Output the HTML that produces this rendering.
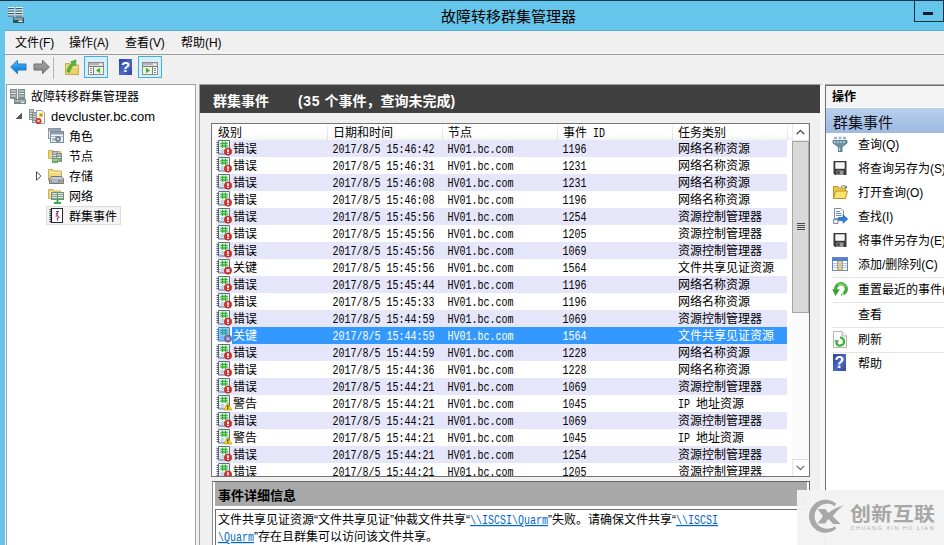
<!DOCTYPE html>
<html lang="zh-CN"><head><meta charset="utf-8"><title>故障转移群集管理器</title>
<style>
html,body{margin:0;padding:0}
html{overflow:hidden;background:#F0F0F0}
body{width:944px;height:545px;overflow:hidden;position:relative;background:#F0F0F0;
 font-family:"Liberation Sans","Noto Sans CJK SC",sans-serif;font-size:12px;color:#000}
div,svg.a{position:absolute}
div{box-sizing:content-box}
.t{white-space:nowrap}
.t.m{letter-spacing:-.1px}
.t.s{font-size:12px}
.q{display:inline-block;font-family:"Liberation Mono",monospace;font-size:10px;transform:scaleY(1.24);transform-origin:50% 72%;white-space:pre}
.k{font-family:"Liberation Sans","Noto Sans CJK SC",sans-serif;letter-spacing:0}
.k.b{font-weight:bold}
.lk{color:#0066CC;text-decoration:underline}
#defs{position:absolute;width:0;height:0;overflow:hidden}
</style></head>
<body>
<svg id="defs" aria-hidden="true"><defs><linearGradient id="gb" x1="0" y1="0" x2="0" y2="1"><stop offset="0" stop-color="#6FC3F7"/><stop offset=".5" stop-color="#2492E6"/><stop offset="1" stop-color="#1A72C8"/></linearGradient><linearGradient id="gf" x1="0" y1="0" x2="0" y2="1"><stop offset="0" stop-color="#A8A8A8"/><stop offset="1" stop-color="#808080"/></linearGradient><linearGradient id="gh" x1="0" y1="0" x2="1" y2="1"><stop offset="0" stop-color="#2B3F9E"/><stop offset=".55" stop-color="#4A68C8"/><stop offset="1" stop-color="#33479F"/></linearGradient><linearGradient id="ne" x1="0" y1="0" x2="1" y2="1"><stop offset="0" stop-color="#FFFFFF"/><stop offset="1" stop-color="#DCE6EE"/></linearGradient><linearGradient id="nes" x1="0" y1="0" x2="1" y2="1"><stop offset="0" stop-color="#99CCFF"/><stop offset="1" stop-color="#88C0F6"/></linearGradient></defs></svg>
<div style="left:0px;top:0px;width:944px;height:31px;background:#66C5EA"></div>
<div style="left:0px;top:0px;width:944px;height:1px;background:#16354A"></div>
<div style="left:0px;top:31px;width:5px;height:514px;background:#66C5EA"></div>
<svg class="a" style="left:8px;top:7px" width="16" height="17" viewBox="0 0 16 17"><rect x="0" y="0" width="7" height="10" fill="#EAF2F6"/><rect x="0" y="1.0" width="6.500" height="1.200" fill="#3A5A6E"/><rect x="0" y="3.5" width="6.500" height="1.200" fill="#3A5A6E"/><rect x="0" y="6.0" width="6.500" height="1.200" fill="#3A5A6E"/><rect x="0" y="8.5" width="6.500" height="1.200" fill="#3A5A6E"/><rect x="8" y="0" width="7" height="10" fill="#EAF2F6"/><rect x="8" y="1.0" width="6.500" height="1.200" fill="#3A5A6E"/><rect x="8" y="3.5" width="6.500" height="1.200" fill="#3A5A6E"/><rect x="8" y="6.0" width="6.500" height="1.200" fill="#3A5A6E"/><rect x="8" y="8.5" width="6.500" height="1.200" fill="#3A5A6E"/><rect x="5" y="10.500" width="11" height="5.500" fill="#33505F"/><rect x="6" y="11.500" width="9" height="1" fill="#D8E6EC"/><rect x="10.500" y="13.500" width="4" height="1.500" fill="#F4F8FA"/></svg>
<div class="t" style="left:441px;top:5.5px;height:22px;line-height:22px;font-size:15px;width:135px;text-align:center;color:#000"><span class="k">故障转移群集管理器</span></div>
<div style="left:914px;top:0px;width:28px;height:21px;border:1px solid #12303F;border-top:none"></div>
<div style="left:943px;top:0px;width:1px;height:22px;background:#12303F"></div>
<div style="left:923px;top:12px;width:10px;height:3px;background:#0A1A2A"></div>
<div style="left:5px;top:31px;width:939px;height:23px;background:#F0F0F0"></div>
<div style="left:5px;top:30px;width:939px;height:1px;background:#5EA6CC"></div>
<div style="left:5px;top:31px;width:939px;height:1px;background:#EAF3F9"></div>
<div class="t m" style="left:15px;top:34px;height:18px;line-height:18px;font-size:12px;"><span class="k">文件</span>(F)</div>
<div class="t m" style="left:69px;top:34px;height:18px;line-height:18px;font-size:12px;"><span class="k">操作</span>(A)</div>
<div class="t m" style="left:125px;top:34px;height:18px;line-height:18px;font-size:12px;"><span class="k">查看</span>(V)</div>
<div class="t m" style="left:181px;top:34px;height:18px;line-height:18px;font-size:12px;"><span class="k">帮助</span>(H)</div>
<div style="left:5px;top:52px;width:939px;height:1px;background:#F7F7F7"></div>
<div style="left:5px;top:54px;width:939px;height:1px;background:#A0A0A0"></div>
<svg class="a" style="left:10px;top:59px" width="17" height="16" viewBox="0 0 17 16"><path d="M.7 8L7.5 1.2V5H16V11H7.5V14.8Z" fill="url(#gb)" stroke="#2C7CC9" stroke-width="1" stroke-linejoin="round"/></svg>
<svg class="a" style="left:33px;top:59px" width="17" height="16" viewBox="0 0 17 16"><path d="M16.3 8L9.5 1.2V5H1V11H9.5V14.8Z" fill="url(#gf)" stroke="#6E6E6E" stroke-width="1" stroke-linejoin="round"/></svg>
<div style="left:53px;top:57px;width:1px;height:22px;background:#B4B4B4"></div>
<svg class="a" style="left:64px;top:59px" width="16" height="16" viewBox="0 0 16 16"><path d="M1.5 4.5H6L7.5 6H14.5V15.5H1.5Z" fill="#EBD06E" stroke="#C9A84C"/><path d="M1.5 8H14.5" stroke="#F6E7A6"/><path d="M3 12.500C3.500 9 5.500 6 8 4.200L6.800 2.800L12 1L11.500 6.500L10 5.500C8 7.500 6.300 10 5.500 13.500Z" fill="#52BB3C" stroke="#2F8A22" stroke-width=".6"/></svg>
<div style="left:84px;top:56px;width:24px;height:22px;border:1px solid #3EB1DA;background:#D8EFFB;box-sizing:border-box"></div>
<svg class="a" style="left:88px;top:62px" width="16" height="13" viewBox="0 0 16 13"><rect x=".5" y=".5" width="15" height="12" fill="#fff" stroke="#8C8C8C"/><rect x="1" y="1" width="14" height="2.5" fill="#B4B4B4"/><rect x="11" y="1.5" width="1.5" height="1.5" fill="#fff"/><rect x="13" y="1.5" width="1.5" height="1.5" fill="#fff"/><path d="M.5 4.5H15.5" stroke="#7D7D7D"/><path d="M5.5 4.5V12.5" stroke="#7D7D7D"/><path d="M2 6.5H4M2 8.5H4M2 10.5H4" stroke="#7D7D7D"/><rect x="6" y="5" width="9" height="7" fill="#EAF6E4"/><path d="M12 5.8V11.2L8 8.5Z" fill="#3FAE2A"/></svg>
<svg class="a" style="left:119px;top:59px" width="13" height="16" viewBox="0 0 13 16"><rect x="0" y="0" width="13" height="16" fill="url(#gh)"/><text x="6.5" y="13.4" text-anchor="middle" font-family="Liberation Sans" font-weight="bold" font-size="15" fill="#fff">?</text></svg>
<div style="left:138px;top:56px;width:24px;height:22px;border:1px solid #3EB1DA;background:#D8EFFB;box-sizing:border-box"></div>
<svg class="a" style="left:142px;top:62px" width="16" height="13" viewBox="0 0 16 13"><rect x=".5" y=".5" width="15" height="12" fill="#fff" stroke="#8C8C8C"/><rect x="1" y="1" width="14" height="2.5" fill="#B4B4B4"/><rect x="11" y="1.5" width="1.5" height="1.5" fill="#fff"/><rect x="13" y="1.5" width="1.5" height="1.5" fill="#fff"/><path d="M.5 4.5H15.5" stroke="#7D7D7D"/><path d="M10.5 4.5V12.5" stroke="#7D7D7D"/><path d="M12 6.5H14M12 8.5H14M12 10.5H14" stroke="#7D7D7D"/><rect x="1" y="5" width="9" height="7" fill="#EAF6E4"/><path d="M4 5.8V11.2L8 8.5Z" fill="#3FAE2A"/></svg>
<div style="left:6px;top:84px;width:190px;height:461px;background:#fff;border:1px solid #A0A0A0;border-bottom:none;box-sizing:border-box"></div>
<svg class="a" style="left:10px;top:88px" width="16" height="16" viewBox="0 0 16 16"><rect x="0" y="1" width="7" height="10" fill="#7F8F90"/><rect x="1" y="2.5" width="5" height="1" fill="#E4EAEA"/><rect x="1" y="5.0" width="5" height="1" fill="#E4EAEA"/><rect x="1" y="7.5" width="5" height="1" fill="#E4EAEA"/><rect x="8" y="1" width="7" height="10" fill="#7F8F90"/><rect x="9" y="2.5" width="5" height="1" fill="#E4EAEA"/><rect x="9" y="5.0" width="5" height="1" fill="#E4EAEA"/><rect x="9" y="7.5" width="5" height="1" fill="#E4EAEA"/><rect x="4" y="11" width="12" height="5" fill="#7A8A8C"/><rect x="5" y="12.5" width="10" height="1" fill="#D8E0E0"/><rect x="11" y="14" width="3" height="1" fill="#E8EEEE"/></svg>
<div class="t" style="left:31px;top:88px;height:18px;line-height:18px;font-size:12px;"><span class="k">故障转移群集管理器</span></div>
<svg class="a" style="left:16px;top:113px" width="6" height="6" viewBox="0 0 6 6"><path d="M5.7 .3V5.700H.3Z" fill="#595959" stroke="#262626" stroke-width=".6"/></svg>
<svg class="a" style="left:29px;top:108px" width="16" height="16" viewBox="0 0 16 16"><rect x="0" y="1" width="5" height="11" fill="#8A9898"/><rect x="1" y="2.5" width="3" height="1" fill="#E4EAEA"/><rect x="1" y="5.0" width="3" height="1" fill="#E4EAEA"/><rect x="1" y="7.5" width="3" height="1" fill="#E4EAEA"/><rect x="1" y="10.0" width="3" height="1" fill="#E4EAEA"/><rect x="3" y="4" width="5" height="11" fill="#7F8F90"/><rect x="4" y="5.5" width="3" height="1" fill="#E4EAEA"/><rect x="4" y="8.0" width="3" height="1" fill="#E4EAEA"/><rect x="4" y="10.5" width="3" height="1" fill="#E4EAEA"/><rect x="4" y="13.0" width="3" height="1" fill="#E4EAEA"/><path d="M7.5 2.5H13L15.5 5V15.5H7.5Z" fill="#FBFBF4" stroke="#9A9AA0"/><rect x="10" y="5" width="4" height="4" fill="#E8D23A"/><rect x="11" y="6" width="2" height="2" fill="#B8960A"/><circle cx="9.5" cy="13" r="3" fill="#D0302A"/><path d="M8.3 11.8L10.7 14.2M10.7 11.8L8.3 14.2" stroke="#fff" stroke-width="1"/></svg>
<div class="t" style="left:51px;top:106.5px;height:19px;line-height:19px;font-size:13px;">devcluster.bc.com</div>
<svg class="a" style="left:48px;top:128px" width="16" height="16" viewBox="0 0 16 16"><rect x=".5" y=".5" width="12" height="10" fill="#EEF2F6" stroke="#8895A3"/><rect x="1" y="1" width="11" height="2" fill="#98A4B2"/><rect x="2.5" y="3.5" width="13" height="11" fill="#F4F7FA" stroke="#7D8A99"/><rect x="3" y="4" width="12" height="2.4" fill="#8D9AA9"/><path d="M3 8.5H15" stroke="#AEB9C5"/><circle cx="10" cy="11" r="3" fill="#6F86A3"/><circle cx="10" cy="11" r="1.1" fill="#E8EEF4"/><rect x="4" y="10" width="3" height="3" fill="#AEB9C5"/></svg>
<div class="t" style="left:69px;top:128px;height:18px;line-height:18px;font-size:12px;"><span class="k">角色</span></div>
<svg class="a" style="left:48px;top:148px" width="16" height="16" viewBox="0 0 16 16"><path d="M.5 2.5H5L6 3.5H12.5V10.5H.5Z" fill="#EED678" stroke="#CFAF55"/><rect x="4" y="3" width="6" height="9" fill="#8A9A98"/><rect x="5" y="4.5" width="4" height="1" fill="#E6ECEA"/><rect x="5" y="7.0" width="4" height="1" fill="#E6ECEA"/><rect x="5" y="9.5" width="4" height="1" fill="#E6ECEA"/><rect x="8" y="5" width="6" height="9" fill="#7E8E8C"/><rect x="9" y="6.5" width="4" height="1" fill="#E6ECEA"/><rect x="9" y="9.0" width="4" height="1" fill="#E6ECEA"/><rect x="9" y="11.5" width="4" height="1" fill="#E6ECEA"/><rect x="4" y="10" width="6" height="5" fill="#6FA86A"/><rect x="5" y="11.5" width="4" height="1" fill="#CFE6CC"/><rect x="9" y="11" width="4" height="2" fill="#7FB07A"/></svg>
<div class="t" style="left:69px;top:148px;height:18px;line-height:18px;font-size:12px;"><span class="k">节点</span></div>
<svg class="a" style="left:36px;top:171px" width="6" height="10" viewBox="0 0 6 10"><path d="M.5 .8L4.900 5L.5 9.200Z" fill="#fff" stroke="#4C4C4C" stroke-width="1"/></svg>
<svg class="a" style="left:48px;top:168px" width="16" height="16" viewBox="0 0 16 16"><path d="M.5 1.5H5L6 3H13.5V12.5H.5Z" fill="#F0DA80" stroke="#CFAF55"/><path d="M1 4.5H13" stroke="#F8ECB4"/><path d="M3.5 8.5H13.5L15.5 11V15.5H1.5V11Z" fill="#C9CDD0" stroke="#6F7478"/><rect x="2.5" y="11.5" width="12" height="3" fill="#8A8F94"/><rect x="4" y="12.5" width="6" height="1" fill="#E6E8EA"/><rect x="12" y="12.5" width="1.5" height="1" fill="#6FD05A"/></svg>
<div class="t" style="left:69px;top:168px;height:18px;line-height:18px;font-size:12px;"><span class="k">存储</span></div>
<svg class="a" style="left:48px;top:188px" width="16" height="16" viewBox="0 0 16 16"><path d="M.5 1.5H5L6 3H12.5V10.5H.5Z" fill="#F0DA80" stroke="#CFAF55"/><path d="M1 4.500H12" stroke="#F8ECB4"/><rect x="3.500" y="4.5" width="12" height="7" fill="#DCE4E0" stroke="#7B8C86"/><path d="M4 6.500H15M4 8.500H15M4 10.500H15" stroke="#7FAE8C"/><path d="M9.500 4.500V11.5" stroke="#7B8C86"/><path d="M9.500 11.500V15" stroke="#2FAE4E" stroke-width="2"/><path d="M6 15H13" stroke="#2FAE4E" stroke-width="2"/></svg>
<div class="t" style="left:69px;top:188px;height:18px;line-height:18px;font-size:12px;"><span class="k">网络</span></div>
<div style="left:46px;top:206px;width:75px;height:19px;background:#F3F3F3;border:1px solid #DCDCDC;box-sizing:border-box"></div>
<svg class="a" style="left:49px;top:208px" width="14" height="16" viewBox="0 0 14 16"><rect x="2.5" y=".5" width="11" height="14" fill="#fff" stroke="#2A2A2A"/><rect x="0.5" y="1.2" width="2.6" height="1" fill="#111"/><rect x="0.5" y="3.2" width="2.6" height="1" fill="#111"/><rect x="0.5" y="5.2" width="2.6" height="1" fill="#111"/><rect x="0.5" y="7.2" width="2.6" height="1" fill="#111"/><rect x="0.5" y="9.2" width="2.6" height="1" fill="#111"/><rect x="0.5" y="11.2" width="2.6" height="1" fill="#111"/><rect x="0.5" y="13.2" width="2.6" height="1" fill="#111"/><path d="M8.5 3V6M7 5L8.5 7.500L10 10M8.500 10V12.5" stroke="#B03060" stroke-width="1.2" fill="none"/><path d="M7 3.500H10M6.500 8H8M9 9.500H10.500" stroke="#6A3FB0" stroke-width="1"/></svg>
<div class="t" style="left:69px;top:208px;height:18px;line-height:18px;font-size:12px;"><span class="k">群集事件</span></div>
<div style="left:199px;top:84px;width:1px;height:461px;background:#A0A0A0"></div>
<div style="left:199px;top:84px;width:622px;height:1px;background:#A0A0A0"></div>
<div style="left:200px;top:85px;width:620px;height:28px;background:#404040"></div>
<div class="t" style="left:213px;top:91px;height:20px;line-height:20px;font-size:14px;color:#fff"><span class="k b">群集事件</span></div>
<div class="t" style="left:298px;top:91px;height:20px;line-height:20px;font-size:14px;color:#fff;font-weight:bold;letter-spacing:.6px">(35 <span class="k b">个事件，查询未完成</span>)</div>
<div style="left:211px;top:123px;width:599px;height:354px;background:#fff;border:1px solid #747474;box-sizing:border-box"></div>
<div style="left:212px;top:124px;width:580px;height:16px;background:linear-gradient(#fff,#fff 60%,#F4F4F4)"></div>
<div style="left:327px;top:124px;width:1px;height:16px;background:linear-gradient(#F4F4F4,#DCDCDC)"></div>
<div style="left:442px;top:124px;width:1px;height:16px;background:linear-gradient(#F4F4F4,#DCDCDC)"></div>
<div style="left:557px;top:124px;width:1px;height:16px;background:linear-gradient(#F4F4F4,#DCDCDC)"></div>
<div style="left:672px;top:124px;width:1px;height:16px;background:linear-gradient(#F4F4F4,#DCDCDC)"></div>
<div style="left:787px;top:124px;width:1px;height:16px;background:linear-gradient(#F4F4F4,#DCDCDC)"></div>
<div class="t s" style="left:218px;top:125px;height:16px;line-height:16px;"><span class="k">级别</span></div>
<div class="t s" style="left:333px;top:125px;height:16px;line-height:16px;"><span class="k">日期和时间</span></div>
<div class="t s" style="left:448px;top:125px;height:16px;line-height:16px;"><span class="k">节点</span></div>
<div class="t s" style="left:563px;top:125px;height:16px;line-height:16px;"><span class="k">事件</span><span class="q"> ID</span></div>
<div class="t s" style="left:678px;top:125px;height:16px;line-height:16px;"><span class="k">任务类别</span></div>
<div style="left:211px;top:123px;width:581px;height:353px;overflow:hidden"><div style="left:5px;top:17px;width:571px;height:17px;background:#E6E6FA"></div><svg class="a" style="left:5px;top:17px" width="16" height="16" viewBox="0 0 16 16"><path d="M2.500 .500H13.500V14H2.500Z" fill="url(#ne)" stroke="#5E7082"/><path d="M.6 2.5H3.2" stroke="#4A5A6A" stroke-width="1"/><path d="M.6 4.5H3.2" stroke="#4A5A6A" stroke-width="1"/><path d="M.6 6.5H3.2" stroke="#4A5A6A" stroke-width="1"/><path d="M.6 8.5H3.2" stroke="#4A5A6A" stroke-width="1"/><path d="M.6 10.5H3.2" stroke="#4A5A6A" stroke-width="1"/><path d="M.6 12.5H3.2" stroke="#4A5A6A" stroke-width="1"/><path d="M4.300 3.500H11.700M4.300 6H11.700M6.500 1.500V8M9.500 1.500V8" stroke="#2FB52F" stroke-width="1.300"/><path d="M4.500 10H8M4.500 12H7.500" stroke="#9FBBD6" stroke-width="1"/><circle cx="12" cy="11.600" r="3.700" fill="#D2332E" stroke="#A82420" stroke-width=".6"/><rect x="11.100" y="9.300" width="1.800" height="2.700" rx=".5" fill="#FFFFFF"/><rect x="11.100" y="12.700" width="1.800" height="1.300" fill="#FFFFFF"/></svg><div class="t s" style="left:22px;top:18px;height:16px;line-height:16px;"><span class="k">错误</span></div><div class="t s" style="left:121.5px;top:18px;height:16px;line-height:16px;"><span class="q">2017/8/5 15:46:42</span></div><div class="t s" style="left:236.5px;top:18px;height:16px;line-height:16px;"><span class="q">HV01.bc.com</span></div><div class="t s" style="left:351.5px;top:18px;height:16px;line-height:16px;"><span class="q">1196</span></div><div class="t s" style="left:467px;top:18px;height:16px;line-height:16px;"><span class="k">网络名称资源</span></div><svg class="a" style="left:5px;top:34px" width="16" height="16" viewBox="0 0 16 16"><path d="M2.500 .500H13.500V14H2.500Z" fill="url(#ne)" stroke="#5E7082"/><path d="M.6 2.5H3.2" stroke="#4A5A6A" stroke-width="1"/><path d="M.6 4.5H3.2" stroke="#4A5A6A" stroke-width="1"/><path d="M.6 6.5H3.2" stroke="#4A5A6A" stroke-width="1"/><path d="M.6 8.5H3.2" stroke="#4A5A6A" stroke-width="1"/><path d="M.6 10.5H3.2" stroke="#4A5A6A" stroke-width="1"/><path d="M.6 12.5H3.2" stroke="#4A5A6A" stroke-width="1"/><path d="M4.300 3.500H11.700M4.300 6H11.700M6.500 1.500V8M9.500 1.500V8" stroke="#2FB52F" stroke-width="1.300"/><path d="M4.500 10H8M4.500 12H7.500" stroke="#9FBBD6" stroke-width="1"/><circle cx="12" cy="11.600" r="3.700" fill="#D2332E" stroke="#A82420" stroke-width=".6"/><rect x="11.100" y="9.300" width="1.800" height="2.700" rx=".5" fill="#FFFFFF"/><rect x="11.100" y="12.700" width="1.800" height="1.300" fill="#FFFFFF"/></svg><div class="t s" style="left:22px;top:35px;height:16px;line-height:16px;"><span class="k">错误</span></div><div class="t s" style="left:121.5px;top:35px;height:16px;line-height:16px;"><span class="q">2017/8/5 15:46:31</span></div><div class="t s" style="left:236.5px;top:35px;height:16px;line-height:16px;"><span class="q">HV01.bc.com</span></div><div class="t s" style="left:351.5px;top:35px;height:16px;line-height:16px;"><span class="q">1231</span></div><div class="t s" style="left:467px;top:35px;height:16px;line-height:16px;"><span class="k">网络名称资源</span></div><div style="left:5px;top:51px;width:571px;height:17px;background:#E6E6FA"></div><svg class="a" style="left:5px;top:51px" width="16" height="16" viewBox="0 0 16 16"><path d="M2.500 .500H13.500V14H2.500Z" fill="url(#ne)" stroke="#5E7082"/><path d="M.6 2.5H3.2" stroke="#4A5A6A" stroke-width="1"/><path d="M.6 4.5H3.2" stroke="#4A5A6A" stroke-width="1"/><path d="M.6 6.5H3.2" stroke="#4A5A6A" stroke-width="1"/><path d="M.6 8.5H3.2" stroke="#4A5A6A" stroke-width="1"/><path d="M.6 10.5H3.2" stroke="#4A5A6A" stroke-width="1"/><path d="M.6 12.5H3.2" stroke="#4A5A6A" stroke-width="1"/><path d="M4.300 3.500H11.700M4.300 6H11.700M6.500 1.500V8M9.500 1.500V8" stroke="#2FB52F" stroke-width="1.300"/><path d="M4.500 10H8M4.500 12H7.500" stroke="#9FBBD6" stroke-width="1"/><circle cx="12" cy="11.600" r="3.700" fill="#D2332E" stroke="#A82420" stroke-width=".6"/><rect x="11.100" y="9.300" width="1.800" height="2.700" rx=".5" fill="#FFFFFF"/><rect x="11.100" y="12.700" width="1.800" height="1.300" fill="#FFFFFF"/></svg><div class="t s" style="left:22px;top:52px;height:16px;line-height:16px;"><span class="k">错误</span></div><div class="t s" style="left:121.5px;top:52px;height:16px;line-height:16px;"><span class="q">2017/8/5 15:46:08</span></div><div class="t s" style="left:236.5px;top:52px;height:16px;line-height:16px;"><span class="q">HV01.bc.com</span></div><div class="t s" style="left:351.5px;top:52px;height:16px;line-height:16px;"><span class="q">1231</span></div><div class="t s" style="left:467px;top:52px;height:16px;line-height:16px;"><span class="k">网络名称资源</span></div><svg class="a" style="left:5px;top:68px" width="16" height="16" viewBox="0 0 16 16"><path d="M2.500 .500H13.500V14H2.500Z" fill="url(#ne)" stroke="#5E7082"/><path d="M.6 2.5H3.2" stroke="#4A5A6A" stroke-width="1"/><path d="M.6 4.5H3.2" stroke="#4A5A6A" stroke-width="1"/><path d="M.6 6.5H3.2" stroke="#4A5A6A" stroke-width="1"/><path d="M.6 8.5H3.2" stroke="#4A5A6A" stroke-width="1"/><path d="M.6 10.5H3.2" stroke="#4A5A6A" stroke-width="1"/><path d="M.6 12.5H3.2" stroke="#4A5A6A" stroke-width="1"/><path d="M4.300 3.500H11.700M4.300 6H11.700M6.500 1.500V8M9.500 1.500V8" stroke="#2FB52F" stroke-width="1.300"/><path d="M4.500 10H8M4.500 12H7.500" stroke="#9FBBD6" stroke-width="1"/><circle cx="12" cy="11.600" r="3.700" fill="#D2332E" stroke="#A82420" stroke-width=".6"/><rect x="11.100" y="9.300" width="1.800" height="2.700" rx=".5" fill="#FFFFFF"/><rect x="11.100" y="12.700" width="1.800" height="1.300" fill="#FFFFFF"/></svg><div class="t s" style="left:22px;top:69px;height:16px;line-height:16px;"><span class="k">错误</span></div><div class="t s" style="left:121.5px;top:69px;height:16px;line-height:16px;"><span class="q">2017/8/5 15:46:08</span></div><div class="t s" style="left:236.5px;top:69px;height:16px;line-height:16px;"><span class="q">HV01.bc.com</span></div><div class="t s" style="left:351.5px;top:69px;height:16px;line-height:16px;"><span class="q">1196</span></div><div class="t s" style="left:467px;top:69px;height:16px;line-height:16px;"><span class="k">网络名称资源</span></div><div style="left:5px;top:85px;width:571px;height:17px;background:#E6E6FA"></div><svg class="a" style="left:5px;top:85px" width="16" height="16" viewBox="0 0 16 16"><path d="M2.500 .500H13.500V14H2.500Z" fill="url(#ne)" stroke="#5E7082"/><path d="M.6 2.5H3.2" stroke="#4A5A6A" stroke-width="1"/><path d="M.6 4.5H3.2" stroke="#4A5A6A" stroke-width="1"/><path d="M.6 6.5H3.2" stroke="#4A5A6A" stroke-width="1"/><path d="M.6 8.5H3.2" stroke="#4A5A6A" stroke-width="1"/><path d="M.6 10.5H3.2" stroke="#4A5A6A" stroke-width="1"/><path d="M.6 12.5H3.2" stroke="#4A5A6A" stroke-width="1"/><path d="M4.300 3.500H11.700M4.300 6H11.700M6.500 1.500V8M9.500 1.500V8" stroke="#2FB52F" stroke-width="1.300"/><path d="M4.500 10H8M4.500 12H7.500" stroke="#9FBBD6" stroke-width="1"/><circle cx="12" cy="11.600" r="3.700" fill="#D2332E" stroke="#A82420" stroke-width=".6"/><rect x="11.100" y="9.300" width="1.800" height="2.700" rx=".5" fill="#FFFFFF"/><rect x="11.100" y="12.700" width="1.800" height="1.300" fill="#FFFFFF"/></svg><div class="t s" style="left:22px;top:86px;height:16px;line-height:16px;"><span class="k">错误</span></div><div class="t s" style="left:121.5px;top:86px;height:16px;line-height:16px;"><span class="q">2017/8/5 15:45:56</span></div><div class="t s" style="left:236.5px;top:86px;height:16px;line-height:16px;"><span class="q">HV01.bc.com</span></div><div class="t s" style="left:351.5px;top:86px;height:16px;line-height:16px;"><span class="q">1254</span></div><div class="t s" style="left:467px;top:86px;height:16px;line-height:16px;"><span class="k">资源控制管理器</span></div><svg class="a" style="left:5px;top:102px" width="16" height="16" viewBox="0 0 16 16"><path d="M2.500 .500H13.500V14H2.500Z" fill="url(#ne)" stroke="#5E7082"/><path d="M.6 2.5H3.2" stroke="#4A5A6A" stroke-width="1"/><path d="M.6 4.5H3.2" stroke="#4A5A6A" stroke-width="1"/><path d="M.6 6.5H3.2" stroke="#4A5A6A" stroke-width="1"/><path d="M.6 8.5H3.2" stroke="#4A5A6A" stroke-width="1"/><path d="M.6 10.5H3.2" stroke="#4A5A6A" stroke-width="1"/><path d="M.6 12.5H3.2" stroke="#4A5A6A" stroke-width="1"/><path d="M4.300 3.500H11.700M4.300 6H11.700M6.500 1.500V8M9.500 1.500V8" stroke="#2FB52F" stroke-width="1.300"/><path d="M4.500 10H8M4.500 12H7.500" stroke="#9FBBD6" stroke-width="1"/><circle cx="12" cy="11.600" r="3.700" fill="#D2332E" stroke="#A82420" stroke-width=".6"/><rect x="11.100" y="9.300" width="1.800" height="2.700" rx=".5" fill="#FFFFFF"/><rect x="11.100" y="12.700" width="1.800" height="1.300" fill="#FFFFFF"/></svg><div class="t s" style="left:22px;top:103px;height:16px;line-height:16px;"><span class="k">错误</span></div><div class="t s" style="left:121.5px;top:103px;height:16px;line-height:16px;"><span class="q">2017/8/5 15:45:56</span></div><div class="t s" style="left:236.5px;top:103px;height:16px;line-height:16px;"><span class="q">HV01.bc.com</span></div><div class="t s" style="left:351.5px;top:103px;height:16px;line-height:16px;"><span class="q">1205</span></div><div class="t s" style="left:467px;top:103px;height:16px;line-height:16px;"><span class="k">资源控制管理器</span></div><div style="left:5px;top:119px;width:571px;height:17px;background:#E6E6FA"></div><svg class="a" style="left:5px;top:119px" width="16" height="16" viewBox="0 0 16 16"><path d="M2.500 .500H13.500V14H2.500Z" fill="url(#ne)" stroke="#5E7082"/><path d="M.6 2.5H3.2" stroke="#4A5A6A" stroke-width="1"/><path d="M.6 4.5H3.2" stroke="#4A5A6A" stroke-width="1"/><path d="M.6 6.5H3.2" stroke="#4A5A6A" stroke-width="1"/><path d="M.6 8.5H3.2" stroke="#4A5A6A" stroke-width="1"/><path d="M.6 10.5H3.2" stroke="#4A5A6A" stroke-width="1"/><path d="M.6 12.5H3.2" stroke="#4A5A6A" stroke-width="1"/><path d="M4.300 3.500H11.700M4.300 6H11.700M6.500 1.500V8M9.500 1.500V8" stroke="#2FB52F" stroke-width="1.300"/><path d="M4.500 10H8M4.500 12H7.500" stroke="#9FBBD6" stroke-width="1"/><circle cx="12" cy="11.600" r="3.700" fill="#D2332E" stroke="#A82420" stroke-width=".6"/><rect x="11.100" y="9.300" width="1.800" height="2.700" rx=".5" fill="#FFFFFF"/><rect x="11.100" y="12.700" width="1.800" height="1.300" fill="#FFFFFF"/></svg><div class="t s" style="left:22px;top:120px;height:16px;line-height:16px;"><span class="k">错误</span></div><div class="t s" style="left:121.5px;top:120px;height:16px;line-height:16px;"><span class="q">2017/8/5 15:45:56</span></div><div class="t s" style="left:236.5px;top:120px;height:16px;line-height:16px;"><span class="q">HV01.bc.com</span></div><div class="t s" style="left:351.5px;top:120px;height:16px;line-height:16px;"><span class="q">1069</span></div><div class="t s" style="left:467px;top:120px;height:16px;line-height:16px;"><span class="k">资源控制管理器</span></div><svg class="a" style="left:5px;top:136px" width="16" height="16" viewBox="0 0 16 16"><path d="M2.500 .500H13.500V14H2.500Z" fill="url(#ne)" stroke="#5E7082"/><path d="M.6 2.5H3.2" stroke="#4A5A6A" stroke-width="1"/><path d="M.6 4.5H3.2" stroke="#4A5A6A" stroke-width="1"/><path d="M.6 6.5H3.2" stroke="#4A5A6A" stroke-width="1"/><path d="M.6 8.5H3.2" stroke="#4A5A6A" stroke-width="1"/><path d="M.6 10.5H3.2" stroke="#4A5A6A" stroke-width="1"/><path d="M.6 12.5H3.2" stroke="#4A5A6A" stroke-width="1"/><path d="M4.300 3.500H11.700M4.300 6H11.700M6.500 1.500V8M9.500 1.500V8" stroke="#2FB52F" stroke-width="1.300"/><path d="M4.500 10H8M4.500 12H7.500" stroke="#9FBBD6" stroke-width="1"/><circle cx="12" cy="11.600" r="3.700" fill="#D2332E" stroke="#A82420" stroke-width=".6"/><path d="M10.600 10.200L13.400 13M13.400 10.200L10.600 13" stroke="#FFFFFF" stroke-width="1.300"/></svg><div class="t s" style="left:22px;top:137px;height:16px;line-height:16px;"><span class="k">关键</span></div><div class="t s" style="left:121.5px;top:137px;height:16px;line-height:16px;"><span class="q">2017/8/5 15:45:56</span></div><div class="t s" style="left:236.5px;top:137px;height:16px;line-height:16px;"><span class="q">HV01.bc.com</span></div><div class="t s" style="left:351.5px;top:137px;height:16px;line-height:16px;"><span class="q">1564</span></div><div class="t s" style="left:467px;top:137px;height:16px;line-height:16px;"><span class="k">文件共享见证资源</span></div><div style="left:5px;top:153px;width:571px;height:17px;background:#E6E6FA"></div><svg class="a" style="left:5px;top:153px" width="16" height="16" viewBox="0 0 16 16"><path d="M2.500 .500H13.500V14H2.500Z" fill="url(#ne)" stroke="#5E7082"/><path d="M.6 2.5H3.2" stroke="#4A5A6A" stroke-width="1"/><path d="M.6 4.5H3.2" stroke="#4A5A6A" stroke-width="1"/><path d="M.6 6.5H3.2" stroke="#4A5A6A" stroke-width="1"/><path d="M.6 8.5H3.2" stroke="#4A5A6A" stroke-width="1"/><path d="M.6 10.5H3.2" stroke="#4A5A6A" stroke-width="1"/><path d="M.6 12.5H3.2" stroke="#4A5A6A" stroke-width="1"/><path d="M4.300 3.500H11.700M4.300 6H11.700M6.500 1.500V8M9.500 1.500V8" stroke="#2FB52F" stroke-width="1.300"/><path d="M4.500 10H8M4.500 12H7.500" stroke="#9FBBD6" stroke-width="1"/><circle cx="12" cy="11.600" r="3.700" fill="#D2332E" stroke="#A82420" stroke-width=".6"/><rect x="11.100" y="9.300" width="1.800" height="2.700" rx=".5" fill="#FFFFFF"/><rect x="11.100" y="12.700" width="1.800" height="1.300" fill="#FFFFFF"/></svg><div class="t s" style="left:22px;top:154px;height:16px;line-height:16px;"><span class="k">错误</span></div><div class="t s" style="left:121.5px;top:154px;height:16px;line-height:16px;"><span class="q">2017/8/5 15:45:44</span></div><div class="t s" style="left:236.5px;top:154px;height:16px;line-height:16px;"><span class="q">HV01.bc.com</span></div><div class="t s" style="left:351.5px;top:154px;height:16px;line-height:16px;"><span class="q">1196</span></div><div class="t s" style="left:467px;top:154px;height:16px;line-height:16px;"><span class="k">网络名称资源</span></div><svg class="a" style="left:5px;top:170px" width="16" height="16" viewBox="0 0 16 16"><path d="M2.500 .500H13.500V14H2.500Z" fill="url(#ne)" stroke="#5E7082"/><path d="M.6 2.5H3.2" stroke="#4A5A6A" stroke-width="1"/><path d="M.6 4.5H3.2" stroke="#4A5A6A" stroke-width="1"/><path d="M.6 6.5H3.2" stroke="#4A5A6A" stroke-width="1"/><path d="M.6 8.5H3.2" stroke="#4A5A6A" stroke-width="1"/><path d="M.6 10.5H3.2" stroke="#4A5A6A" stroke-width="1"/><path d="M.6 12.5H3.2" stroke="#4A5A6A" stroke-width="1"/><path d="M4.300 3.500H11.700M4.300 6H11.700M6.500 1.500V8M9.500 1.500V8" stroke="#2FB52F" stroke-width="1.300"/><path d="M4.500 10H8M4.500 12H7.500" stroke="#9FBBD6" stroke-width="1"/><circle cx="12" cy="11.600" r="3.700" fill="#D2332E" stroke="#A82420" stroke-width=".6"/><rect x="11.100" y="9.300" width="1.800" height="2.700" rx=".5" fill="#FFFFFF"/><rect x="11.100" y="12.700" width="1.800" height="1.300" fill="#FFFFFF"/></svg><div class="t s" style="left:22px;top:171px;height:16px;line-height:16px;"><span class="k">错误</span></div><div class="t s" style="left:121.5px;top:171px;height:16px;line-height:16px;"><span class="q">2017/8/5 15:45:33</span></div><div class="t s" style="left:236.5px;top:171px;height:16px;line-height:16px;"><span class="q">HV01.bc.com</span></div><div class="t s" style="left:351.5px;top:171px;height:16px;line-height:16px;"><span class="q">1196</span></div><div class="t s" style="left:467px;top:171px;height:16px;line-height:16px;"><span class="k">网络名称资源</span></div><div style="left:5px;top:187px;width:571px;height:17px;background:#E6E6FA"></div><svg class="a" style="left:5px;top:187px" width="16" height="16" viewBox="0 0 16 16"><path d="M2.500 .500H13.500V14H2.500Z" fill="url(#ne)" stroke="#5E7082"/><path d="M.6 2.5H3.2" stroke="#4A5A6A" stroke-width="1"/><path d="M.6 4.5H3.2" stroke="#4A5A6A" stroke-width="1"/><path d="M.6 6.5H3.2" stroke="#4A5A6A" stroke-width="1"/><path d="M.6 8.5H3.2" stroke="#4A5A6A" stroke-width="1"/><path d="M.6 10.5H3.2" stroke="#4A5A6A" stroke-width="1"/><path d="M.6 12.5H3.2" stroke="#4A5A6A" stroke-width="1"/><path d="M4.300 3.500H11.700M4.300 6H11.700M6.500 1.500V8M9.500 1.500V8" stroke="#2FB52F" stroke-width="1.300"/><path d="M4.500 10H8M4.500 12H7.500" stroke="#9FBBD6" stroke-width="1"/><circle cx="12" cy="11.600" r="3.700" fill="#D2332E" stroke="#A82420" stroke-width=".6"/><rect x="11.100" y="9.300" width="1.800" height="2.700" rx=".5" fill="#FFFFFF"/><rect x="11.100" y="12.700" width="1.800" height="1.300" fill="#FFFFFF"/></svg><div class="t s" style="left:22px;top:188px;height:16px;line-height:16px;"><span class="k">错误</span></div><div class="t s" style="left:121.5px;top:188px;height:16px;line-height:16px;"><span class="q">2017/8/5 15:44:59</span></div><div class="t s" style="left:236.5px;top:188px;height:16px;line-height:16px;"><span class="q">HV01.bc.com</span></div><div class="t s" style="left:351.5px;top:188px;height:16px;line-height:16px;"><span class="q">1069</span></div><div class="t s" style="left:467px;top:188px;height:16px;line-height:16px;"><span class="k">资源控制管理器</span></div><div style="left:21px;top:204px;width:555px;height:17px;background:#3399FF"></div><svg class="a" style="left:5px;top:204px" width="16" height="16" viewBox="0 0 16 16"><path d="M2.500 .500H13.500V14H2.500Z" fill="url(#nes)" stroke="#4884C0"/><path d="M.6 2.5H3.2" stroke="#3E7AB4" stroke-width="1"/><path d="M.6 4.5H3.2" stroke="#3E7AB4" stroke-width="1"/><path d="M.6 6.5H3.2" stroke="#3E7AB4" stroke-width="1"/><path d="M.6 8.5H3.2" stroke="#3E7AB4" stroke-width="1"/><path d="M.6 10.5H3.2" stroke="#3E7AB4" stroke-width="1"/><path d="M.6 12.5H3.2" stroke="#3E7AB4" stroke-width="1"/><path d="M4.300 3.500H11.700M4.300 6H11.700M6.500 1.500V8M9.500 1.500V8" stroke="#31A797" stroke-width="1.300"/><path d="M4.500 10H8M4.500 12H7.500" stroke="#69AAEA" stroke-width="1"/><circle cx="12" cy="11.600" r="3.700" fill="#826696" stroke="#6E5E90" stroke-width=".6"/><path d="M10.600 10.200L13.400 13M13.400 10.200L10.600 13" stroke="#99CCFF" stroke-width="1.300"/></svg><div class="t s" style="left:22px;top:205px;height:16px;line-height:16px;color:#fff;"><span class="k">关键</span></div><div class="t s" style="left:121.5px;top:205px;height:16px;line-height:16px;color:#fff;"><span class="q">2017/8/5 15:44:59</span></div><div class="t s" style="left:236.5px;top:205px;height:16px;line-height:16px;color:#fff;"><span class="q">HV01.bc.com</span></div><div class="t s" style="left:351.5px;top:205px;height:16px;line-height:16px;color:#fff;"><span class="q">1564</span></div><div class="t s" style="left:467px;top:205px;height:16px;line-height:16px;color:#fff;"><span class="k">文件共享见证资源</span></div><div style="left:5px;top:221px;width:571px;height:17px;background:#E6E6FA"></div><svg class="a" style="left:5px;top:221px" width="16" height="16" viewBox="0 0 16 16"><path d="M2.500 .500H13.500V14H2.500Z" fill="url(#ne)" stroke="#5E7082"/><path d="M.6 2.5H3.2" stroke="#4A5A6A" stroke-width="1"/><path d="M.6 4.5H3.2" stroke="#4A5A6A" stroke-width="1"/><path d="M.6 6.5H3.2" stroke="#4A5A6A" stroke-width="1"/><path d="M.6 8.5H3.2" stroke="#4A5A6A" stroke-width="1"/><path d="M.6 10.5H3.2" stroke="#4A5A6A" stroke-width="1"/><path d="M.6 12.5H3.2" stroke="#4A5A6A" stroke-width="1"/><path d="M4.300 3.500H11.700M4.300 6H11.700M6.500 1.500V8M9.500 1.500V8" stroke="#2FB52F" stroke-width="1.300"/><path d="M4.500 10H8M4.500 12H7.500" stroke="#9FBBD6" stroke-width="1"/><circle cx="12" cy="11.600" r="3.700" fill="#D2332E" stroke="#A82420" stroke-width=".6"/><rect x="11.100" y="9.300" width="1.800" height="2.700" rx=".5" fill="#FFFFFF"/><rect x="11.100" y="12.700" width="1.800" height="1.300" fill="#FFFFFF"/></svg><div class="t s" style="left:22px;top:222px;height:16px;line-height:16px;"><span class="k">错误</span></div><div class="t s" style="left:121.5px;top:222px;height:16px;line-height:16px;"><span class="q">2017/8/5 15:44:59</span></div><div class="t s" style="left:236.5px;top:222px;height:16px;line-height:16px;"><span class="q">HV01.bc.com</span></div><div class="t s" style="left:351.5px;top:222px;height:16px;line-height:16px;"><span class="q">1228</span></div><div class="t s" style="left:467px;top:222px;height:16px;line-height:16px;"><span class="k">网络名称资源</span></div><svg class="a" style="left:5px;top:238px" width="16" height="16" viewBox="0 0 16 16"><path d="M2.500 .500H13.500V14H2.500Z" fill="url(#ne)" stroke="#5E7082"/><path d="M.6 2.5H3.2" stroke="#4A5A6A" stroke-width="1"/><path d="M.6 4.5H3.2" stroke="#4A5A6A" stroke-width="1"/><path d="M.6 6.5H3.2" stroke="#4A5A6A" stroke-width="1"/><path d="M.6 8.5H3.2" stroke="#4A5A6A" stroke-width="1"/><path d="M.6 10.5H3.2" stroke="#4A5A6A" stroke-width="1"/><path d="M.6 12.5H3.2" stroke="#4A5A6A" stroke-width="1"/><path d="M4.300 3.500H11.700M4.300 6H11.700M6.500 1.500V8M9.500 1.500V8" stroke="#2FB52F" stroke-width="1.300"/><path d="M4.500 10H8M4.500 12H7.500" stroke="#9FBBD6" stroke-width="1"/><circle cx="12" cy="11.600" r="3.700" fill="#D2332E" stroke="#A82420" stroke-width=".6"/><rect x="11.100" y="9.300" width="1.800" height="2.700" rx=".5" fill="#FFFFFF"/><rect x="11.100" y="12.700" width="1.800" height="1.300" fill="#FFFFFF"/></svg><div class="t s" style="left:22px;top:239px;height:16px;line-height:16px;"><span class="k">错误</span></div><div class="t s" style="left:121.5px;top:239px;height:16px;line-height:16px;"><span class="q">2017/8/5 15:44:36</span></div><div class="t s" style="left:236.5px;top:239px;height:16px;line-height:16px;"><span class="q">HV01.bc.com</span></div><div class="t s" style="left:351.5px;top:239px;height:16px;line-height:16px;"><span class="q">1228</span></div><div class="t s" style="left:467px;top:239px;height:16px;line-height:16px;"><span class="k">网络名称资源</span></div><div style="left:5px;top:255px;width:571px;height:17px;background:#E6E6FA"></div><svg class="a" style="left:5px;top:255px" width="16" height="16" viewBox="0 0 16 16"><path d="M2.500 .500H13.500V14H2.500Z" fill="url(#ne)" stroke="#5E7082"/><path d="M.6 2.5H3.2" stroke="#4A5A6A" stroke-width="1"/><path d="M.6 4.5H3.2" stroke="#4A5A6A" stroke-width="1"/><path d="M.6 6.5H3.2" stroke="#4A5A6A" stroke-width="1"/><path d="M.6 8.5H3.2" stroke="#4A5A6A" stroke-width="1"/><path d="M.6 10.5H3.2" stroke="#4A5A6A" stroke-width="1"/><path d="M.6 12.5H3.2" stroke="#4A5A6A" stroke-width="1"/><path d="M4.300 3.500H11.700M4.300 6H11.700M6.500 1.500V8M9.500 1.500V8" stroke="#2FB52F" stroke-width="1.300"/><path d="M4.500 10H8M4.500 12H7.500" stroke="#9FBBD6" stroke-width="1"/><circle cx="12" cy="11.600" r="3.700" fill="#D2332E" stroke="#A82420" stroke-width=".6"/><rect x="11.100" y="9.300" width="1.800" height="2.700" rx=".5" fill="#FFFFFF"/><rect x="11.100" y="12.700" width="1.800" height="1.300" fill="#FFFFFF"/></svg><div class="t s" style="left:22px;top:256px;height:16px;line-height:16px;"><span class="k">错误</span></div><div class="t s" style="left:121.5px;top:256px;height:16px;line-height:16px;"><span class="q">2017/8/5 15:44:21</span></div><div class="t s" style="left:236.5px;top:256px;height:16px;line-height:16px;"><span class="q">HV01.bc.com</span></div><div class="t s" style="left:351.5px;top:256px;height:16px;line-height:16px;"><span class="q">1069</span></div><div class="t s" style="left:467px;top:256px;height:16px;line-height:16px;"><span class="k">资源控制管理器</span></div><svg class="a" style="left:5px;top:272px" width="16" height="16" viewBox="0 0 16 16"><path d="M2.500 .500H13.500V14H2.500Z" fill="url(#ne)" stroke="#5E7082"/><path d="M.6 2.5H3.2" stroke="#4A5A6A" stroke-width="1"/><path d="M.6 4.5H3.2" stroke="#4A5A6A" stroke-width="1"/><path d="M.6 6.5H3.2" stroke="#4A5A6A" stroke-width="1"/><path d="M.6 8.5H3.2" stroke="#4A5A6A" stroke-width="1"/><path d="M.6 10.5H3.2" stroke="#4A5A6A" stroke-width="1"/><path d="M.6 12.5H3.2" stroke="#4A5A6A" stroke-width="1"/><path d="M4.300 3.500H11.700M4.300 6H11.700M6.500 1.500V8M9.500 1.500V8" stroke="#2FB52F" stroke-width="1.300"/><path d="M4.500 10H8M4.500 12H7.500" stroke="#9FBBD6" stroke-width="1"/><path d="M11.800 7.800L15.800 15H7.800Z" fill="#F7D72B" stroke="#B8960F" stroke-width=".7" stroke-linejoin="round"/><path d="M11.800 10.200V12.600" stroke="#222222" stroke-width="1.200"/><rect x="11.200" y="13.200" width="1.200" height="1.100" fill="#222222"/></svg><div class="t s" style="left:22px;top:273px;height:16px;line-height:16px;"><span class="k">警告</span></div><div class="t s" style="left:121.5px;top:273px;height:16px;line-height:16px;"><span class="q">2017/8/5 15:44:21</span></div><div class="t s" style="left:236.5px;top:273px;height:16px;line-height:16px;"><span class="q">HV01.bc.com</span></div><div class="t s" style="left:351.5px;top:273px;height:16px;line-height:16px;"><span class="q">1045</span></div><div class="t s" style="left:467px;top:273px;height:16px;line-height:16px;"><span class="q">IP </span><span class="k">地址资源</span></div><div style="left:5px;top:289px;width:571px;height:17px;background:#E6E6FA"></div><svg class="a" style="left:5px;top:289px" width="16" height="16" viewBox="0 0 16 16"><path d="M2.500 .500H13.500V14H2.500Z" fill="url(#ne)" stroke="#5E7082"/><path d="M.6 2.5H3.2" stroke="#4A5A6A" stroke-width="1"/><path d="M.6 4.5H3.2" stroke="#4A5A6A" stroke-width="1"/><path d="M.6 6.5H3.2" stroke="#4A5A6A" stroke-width="1"/><path d="M.6 8.5H3.2" stroke="#4A5A6A" stroke-width="1"/><path d="M.6 10.5H3.2" stroke="#4A5A6A" stroke-width="1"/><path d="M.6 12.5H3.2" stroke="#4A5A6A" stroke-width="1"/><path d="M4.300 3.500H11.700M4.300 6H11.700M6.500 1.500V8M9.500 1.500V8" stroke="#2FB52F" stroke-width="1.300"/><path d="M4.500 10H8M4.500 12H7.500" stroke="#9FBBD6" stroke-width="1"/><circle cx="12" cy="11.600" r="3.700" fill="#D2332E" stroke="#A82420" stroke-width=".6"/><rect x="11.100" y="9.300" width="1.800" height="2.700" rx=".5" fill="#FFFFFF"/><rect x="11.100" y="12.700" width="1.800" height="1.300" fill="#FFFFFF"/></svg><div class="t s" style="left:22px;top:290px;height:16px;line-height:16px;"><span class="k">错误</span></div><div class="t s" style="left:121.5px;top:290px;height:16px;line-height:16px;"><span class="q">2017/8/5 15:44:21</span></div><div class="t s" style="left:236.5px;top:290px;height:16px;line-height:16px;"><span class="q">HV01.bc.com</span></div><div class="t s" style="left:351.5px;top:290px;height:16px;line-height:16px;"><span class="q">1069</span></div><div class="t s" style="left:467px;top:290px;height:16px;line-height:16px;"><span class="k">资源控制管理器</span></div><svg class="a" style="left:5px;top:306px" width="16" height="16" viewBox="0 0 16 16"><path d="M2.500 .500H13.500V14H2.500Z" fill="url(#ne)" stroke="#5E7082"/><path d="M.6 2.5H3.2" stroke="#4A5A6A" stroke-width="1"/><path d="M.6 4.5H3.2" stroke="#4A5A6A" stroke-width="1"/><path d="M.6 6.5H3.2" stroke="#4A5A6A" stroke-width="1"/><path d="M.6 8.5H3.2" stroke="#4A5A6A" stroke-width="1"/><path d="M.6 10.5H3.2" stroke="#4A5A6A" stroke-width="1"/><path d="M.6 12.5H3.2" stroke="#4A5A6A" stroke-width="1"/><path d="M4.300 3.500H11.700M4.300 6H11.700M6.500 1.500V8M9.500 1.500V8" stroke="#2FB52F" stroke-width="1.300"/><path d="M4.500 10H8M4.500 12H7.500" stroke="#9FBBD6" stroke-width="1"/><path d="M11.800 7.800L15.800 15H7.800Z" fill="#F7D72B" stroke="#B8960F" stroke-width=".7" stroke-linejoin="round"/><path d="M11.800 10.200V12.600" stroke="#222222" stroke-width="1.200"/><rect x="11.200" y="13.200" width="1.200" height="1.100" fill="#222222"/></svg><div class="t s" style="left:22px;top:307px;height:16px;line-height:16px;"><span class="k">警告</span></div><div class="t s" style="left:121.5px;top:307px;height:16px;line-height:16px;"><span class="q">2017/8/5 15:44:21</span></div><div class="t s" style="left:236.5px;top:307px;height:16px;line-height:16px;"><span class="q">HV01.bc.com</span></div><div class="t s" style="left:351.5px;top:307px;height:16px;line-height:16px;"><span class="q">1045</span></div><div class="t s" style="left:467px;top:307px;height:16px;line-height:16px;"><span class="q">IP </span><span class="k">地址资源</span></div><div style="left:5px;top:323px;width:571px;height:17px;background:#E6E6FA"></div><svg class="a" style="left:5px;top:323px" width="16" height="16" viewBox="0 0 16 16"><path d="M2.500 .500H13.500V14H2.500Z" fill="url(#ne)" stroke="#5E7082"/><path d="M.6 2.5H3.2" stroke="#4A5A6A" stroke-width="1"/><path d="M.6 4.5H3.2" stroke="#4A5A6A" stroke-width="1"/><path d="M.6 6.5H3.2" stroke="#4A5A6A" stroke-width="1"/><path d="M.6 8.5H3.2" stroke="#4A5A6A" stroke-width="1"/><path d="M.6 10.5H3.2" stroke="#4A5A6A" stroke-width="1"/><path d="M.6 12.5H3.2" stroke="#4A5A6A" stroke-width="1"/><path d="M4.300 3.500H11.700M4.300 6H11.700M6.500 1.500V8M9.500 1.500V8" stroke="#2FB52F" stroke-width="1.300"/><path d="M4.500 10H8M4.500 12H7.500" stroke="#9FBBD6" stroke-width="1"/><circle cx="12" cy="11.600" r="3.700" fill="#D2332E" stroke="#A82420" stroke-width=".6"/><rect x="11.100" y="9.300" width="1.800" height="2.700" rx=".5" fill="#FFFFFF"/><rect x="11.100" y="12.700" width="1.800" height="1.300" fill="#FFFFFF"/></svg><div class="t s" style="left:22px;top:324px;height:16px;line-height:16px;"><span class="k">错误</span></div><div class="t s" style="left:121.5px;top:324px;height:16px;line-height:16px;"><span class="q">2017/8/5 15:44:21</span></div><div class="t s" style="left:236.5px;top:324px;height:16px;line-height:16px;"><span class="q">HV01.bc.com</span></div><div class="t s" style="left:351.5px;top:324px;height:16px;line-height:16px;"><span class="q">1254</span></div><div class="t s" style="left:467px;top:324px;height:16px;line-height:16px;"><span class="k">资源控制管理器</span></div><svg class="a" style="left:5px;top:340px" width="16" height="16" viewBox="0 0 16 16"><path d="M2.500 .500H13.500V14H2.500Z" fill="url(#ne)" stroke="#5E7082"/><path d="M.6 2.5H3.2" stroke="#4A5A6A" stroke-width="1"/><path d="M.6 4.5H3.2" stroke="#4A5A6A" stroke-width="1"/><path d="M.6 6.5H3.2" stroke="#4A5A6A" stroke-width="1"/><path d="M.6 8.5H3.2" stroke="#4A5A6A" stroke-width="1"/><path d="M.6 10.5H3.2" stroke="#4A5A6A" stroke-width="1"/><path d="M.6 12.5H3.2" stroke="#4A5A6A" stroke-width="1"/><path d="M4.300 3.500H11.700M4.300 6H11.700M6.500 1.500V8M9.500 1.500V8" stroke="#2FB52F" stroke-width="1.300"/><path d="M4.500 10H8M4.500 12H7.500" stroke="#9FBBD6" stroke-width="1"/><circle cx="12" cy="11.600" r="3.700" fill="#D2332E" stroke="#A82420" stroke-width=".6"/><rect x="11.100" y="9.300" width="1.800" height="2.700" rx=".5" fill="#FFFFFF"/><rect x="11.100" y="12.700" width="1.800" height="1.300" fill="#FFFFFF"/></svg><div class="t s" style="left:22px;top:341px;height:16px;line-height:16px;"><span class="k">错误</span></div><div class="t s" style="left:121.5px;top:341px;height:16px;line-height:16px;"><span class="q">2017/8/5 15:44:21</span></div><div class="t s" style="left:236.5px;top:341px;height:16px;line-height:16px;"><span class="q">HV01.bc.com</span></div><div class="t s" style="left:351.5px;top:341px;height:16px;line-height:16px;"><span class="q">1205</span></div><div class="t s" style="left:467px;top:341px;height:16px;line-height:16px;"><span class="k">资源控制管理器</span></div></div>
<div style="left:792px;top:124px;width:17px;height:352px;background:#F0F0F0"></div>
<div style="left:792px;top:124px;width:17px;height:17px;background:#fff;border:1px solid #E8E8E8;border-top:none;box-sizing:border-box"></div>
<svg class="a" style="left:796px;top:129px" width="9" height="6" viewBox="0 0 9 6"><path d="M.7 5.2L4.5 1.4L8.3 5.2" fill="none" stroke="#484848" stroke-width="1.3"/></svg>
<div style="left:792px;top:141px;width:17px;height:172px;background:#D9D9D9;border:1px solid #A6A6A6;box-sizing:border-box"></div>
<div style="left:792px;top:313px;width:17px;height:146px;background:#FAFAFA"></div>
<div style="left:797px;top:223px;width:8px;height:1px;background:#4A4A4A"></div>
<div style="left:797px;top:225px;width:8px;height:1px;background:#4A4A4A"></div>
<div style="left:797px;top:227px;width:8px;height:1px;background:#4A4A4A"></div>
<div style="left:797px;top:229px;width:8px;height:1px;background:#4A4A4A"></div>
<div style="left:792px;top:459px;width:17px;height:17px;background:#fff;border-top:1px solid #DCDCDC;border-left:1px solid #E6E6E6;box-sizing:border-box"></div>
<svg class="a" style="left:796px;top:465px" width="9" height="6" viewBox="0 0 9 6"><path d="M.7 .8L4.5 4.600L8.300 .8" fill="none" stroke="#666" stroke-width="1.200"/></svg>
<div style="left:212px;top:481px;width:598px;height:64px;background:#fff;border:1px solid #8C8C8C;border-top-color:#646464;border-right-color:#646464;border-bottom:none;box-sizing:border-box"></div>
<div style="left:215px;top:482px;width:592px;height:24px;background:#A9A9A9"></div>
<div class="t" style="left:218px;top:487px;height:18px;line-height:18px;font-size:13px;"><span class="k b">事件详细信息</span></div>
<div style="left:215px;top:509px;width:595px;height:36px;background:#fff;border:1px solid #6E6E6E;border-right:none;border-bottom:none;box-sizing:border-box"></div>
<div class="t s" style="left:218px;top:512px;height:17px;line-height:17px"><span class="k">文件共享见证资源“文件共享见证”仲裁文件共享“</span><span class="q lk">\\ISCSI\Quarm</span><span class="k">”失败。请确保文件共享“</span><span class="q lk">\\ISCSI</span></div>
<div class="t s" style="left:218px;top:529px;height:17px;line-height:17px"><span class="q lk">\Quarm</span><span class="k">”存在且群集可以访问该文件共享。</span></div>
<div style="left:820px;top:85px;width:5px;height:460px;background:#F7F7F7"></div>
<div style="left:825px;top:84px;width:119px;height:1px;background:#A8A8A8"></div>
<div style="left:825px;top:85px;width:119px;height:460px;background:#fff;border-left:1px solid #6E6E6E;border-top:1px solid #6E6E6E;box-sizing:border-box"></div>
<div style="left:826px;top:86px;width:118px;height:21px;background:#F4F4F4"></div>
<div class="t" style="left:832px;top:88px;height:18px;line-height:18px;font-size:12px;"><span class="k b">操作</span></div>
<div style="left:826px;top:108px;width:118px;height:25px;background:linear-gradient(#B9D0EC,#9DB9E1)"></div>
<div class="t" style="left:833px;top:112px;height:22px;line-height:22px;font-size:15px;color:#0E1018"><span class="k">群集事件</span></div>
<div class="t m" style="left:858px;top:136px;height:18px;line-height:18px;font-size:12px;white-space:nowrap"><span class="k">查询</span>(Q)</div>
<svg class="a" style="left:832px;top:136px" width="16" height="16" viewBox="0 0 16 16"><path d="M1 4.500H15V7L10 11V16H6.500V11L1 7Z" fill="#6A94A2" stroke="#477283" stroke-width=".8"/><path d="M2 2H5M6.500 2H9.500M11 2H14" stroke="#9BB4BE" stroke-width="2.400"/><path d="M2 6H14" stroke="#E2EEF2" stroke-width="1.200" stroke-dasharray="2 1"/><path d="M7.500 11.500V15" stroke="#C4D8DE" stroke-width="1"/></svg>
<div class="t m" style="left:858px;top:160px;height:18px;line-height:18px;font-size:12px;white-space:nowrap"><span class="k">将查询另存为</span>(S)</div>
<svg class="a" style="left:832px;top:160px" width="16" height="16" viewBox="0 0 16 16"><path d="M1.500 1H14.500V15H3L1.500 13.500Z" fill="#3A3A3A"/><rect x="3.300" y="2.300" width="9.400" height="6.500" fill="#F6F6F6"/><rect x="4.500" y="10.500" width="7" height="4.500" fill="#9A9A9A"/><rect x="5.500" y="11.200" width="2" height="3" fill="#333"/></svg>
<div class="t m" style="left:858px;top:184px;height:18px;line-height:18px;font-size:12px;white-space:nowrap"><span class="k">打开查询</span>(O)</div>
<svg class="a" style="left:832px;top:184px" width="16" height="16" viewBox="0 0 16 16"><path d="M1.500 2.500H6L7 4H13.500V14.500H1.500Z" fill="#EBCB45" stroke="#B8942A" stroke-linejoin="round"/><path d="M3.500 7H15.500L13.500 14.500H1.500Z" fill="#F8E36E" stroke="#B8942A" stroke-linejoin="round"/><path d="M9 3C10.500 1.200 13 1.200 14.200 3" fill="none" stroke="#6A6A6A" stroke-width="1"/><path d="M15 1.500V4H12.500Z" fill="#6A6A6A"/></svg>
<div class="t m" style="left:858px;top:208px;height:18px;line-height:18px;font-size:12px;white-space:nowrap"><span class="k">查找</span>(I)</div>
<svg class="a" style="left:832px;top:208px" width="16" height="16" viewBox="0 0 16 16"><path d="M2.500 .5H9L11.500 3V10.500H2.500Z" fill="#fff" stroke="#7A8CA8"/><path d="M4 3.500H8M4 5.500H9.500M4 7.500H9.500" stroke="#6F86B8" stroke-width="1"/><path d="M1.500 11.500H6V15.500H1.500Z" fill="#E8EEF8" stroke="#7A8CA8"/><path d="M6.500 9.500H11V6.800L15.700 11L11 15.200V12.500H6.500Z" fill="#2F7FE0" stroke="#1F5FB8" stroke-width=".7"/></svg>
<div class="t m" style="left:858px;top:232px;height:18px;line-height:18px;font-size:12px;white-space:nowrap"><span class="k">将事件另存为</span>(E)</div>
<svg class="a" style="left:832px;top:232px" width="16" height="16" viewBox="0 0 16 16"><path d="M1.500 1H14.500V15H3L1.500 13.500Z" fill="#3A3A3A"/><rect x="3.300" y="2.300" width="9.400" height="6.500" fill="#F6F6F6"/><rect x="4.500" y="10.500" width="7" height="4.500" fill="#9A9A9A"/><rect x="5.500" y="11.200" width="2" height="3" fill="#333"/></svg>
<div class="t m" style="left:858px;top:256px;height:18px;line-height:18px;font-size:12px;white-space:nowrap"><span class="k">添加</span>/<span class="k">删除列</span>(C)</div>
<svg class="a" style="left:832px;top:256px" width="16" height="16" viewBox="0 0 16 16"><rect x=".5" y="1.500" width="15" height="13" fill="#fff" stroke="#6E87B4"/><rect x="1" y="2" width="14" height="3" fill="#4F7FD0"/><rect x="6" y="5" width="4" height="9" fill="#F4C95A"/><path d="M1 7.500H15M1 9.500H15M1 11.500H15" stroke="#B8C6DE" stroke-width="1"/><path d="M5.500 5V14M10.500 5V14" stroke="#8FA4C8"/></svg>
<div class="t m" style="left:858px;top:281px;height:18px;line-height:18px;font-size:12px;white-space:nowrap"><span class="k">重置最近的事件</span>(R)</div>
<svg class="a" style="left:832px;top:281px" width="16" height="16" viewBox="0 0 16 16"><path d="M11.650 12.600A5.300 5.300 0 1 0 3.700 8.500" fill="none" stroke="#3FA836" stroke-width="3.200"/><path d="M5.600 4.200A5.200 5.200 0 0 1 13.800 6" fill="none" stroke="#8BDC7C" stroke-width="1.100"/><path d="M.200 8.300H7.800L3.600 14.900Z" fill="#36A02D"/><path d="M11.500 12.800L8.500 14.300" stroke="#3FA836" stroke-width="1.800" stroke-dasharray="1 .8"/></svg>
<div class="t m" style="left:858px;top:306px;height:18px;line-height:18px;font-size:12px;white-space:nowrap"><span class="k">查看</span></div>
<div class="t m" style="left:858px;top:331px;height:18px;line-height:18px;font-size:12px;white-space:nowrap"><span class="k">刷新</span></div>
<svg class="a" style="left:832px;top:331px" width="16" height="17" viewBox="0 0 16 17"><path d="M1.500 .500H10L14.500 5V16.500H1.500Z" fill="#fff" stroke="#B4B4B4"/><path d="M10 .500V5H14.500" fill="#EFEFEF" stroke="#B4B4B4"/><path d="M8 6.500A4 4 0 1 1 4.200 11.800" fill="none" stroke="#43B23A" stroke-width="2.200"/><path d="M2.300 9L7.300 9.500L4.500 13.400Z" fill="#43B23A"/></svg>
<div class="t m" style="left:858px;top:355px;height:18px;line-height:18px;font-size:12px;white-space:nowrap"><span class="k">帮助</span></div>
<svg class="a" style="left:833px;top:354px" width="13" height="17" viewBox="0 0 13 17"><rect x="0" y="0" width="13" height="17" fill="url(#gh)"/><text x="6.5" y="14.4" text-anchor="middle" font-family="Liberation Sans" font-weight="bold" font-size="16" fill="#fff">?</text></svg>
<div style="left:832px;top:277px;width:112px;height:1px;background:#E6E6E6"></div>
<div style="left:832px;top:302px;width:112px;height:1px;background:#E6E6E6"></div>
<div style="left:832px;top:327px;width:112px;height:1px;background:#E6E6E6"></div>
<div style="left:832px;top:352px;width:112px;height:1px;background:#E6E6E6"></div>
<div style="left:797px;top:490px;width:147px;height:55px;background:rgba(243,243,243,.96)"></div>
<svg class="a" style="left:806px;top:497px" width="42" height="38" viewBox="0 0 42 38"><path d="M30.100 6.560A16.500 16.500 0 1 0 30.100 31.840L28.960 29.130A12.600 12.600 0 1 1 28.960 9.270Z" fill="#A8A8A8"/><path d="M11.600 12H19.300L22.400 15.900Q29 10.300 38 8.200Q31.500 12.500 26.800 19.200L34.600 26.900H27.200L22.300 22.100L19.200 26.400H11.600L17 19.200Z" fill="#A8A8A8"/></svg><div class="t" style="left:850px;top:503px;height:24px;line-height:24px;font-size:19px;color:#A6A6A6;letter-spacing:0;transform:scaleX(1.1);transform-origin:0 0"><span class="k b" style="letter-spacing:.02em">创新互联</span></div><div class="t" style="left:850.500px;top:524px;width:86px;height:8px;line-height:8px;font-size:5.500px;color:#ABABAB;letter-spacing:1.480px;white-space:nowrap">CHUANG XIN HU LIAN</div>
</body></html>
